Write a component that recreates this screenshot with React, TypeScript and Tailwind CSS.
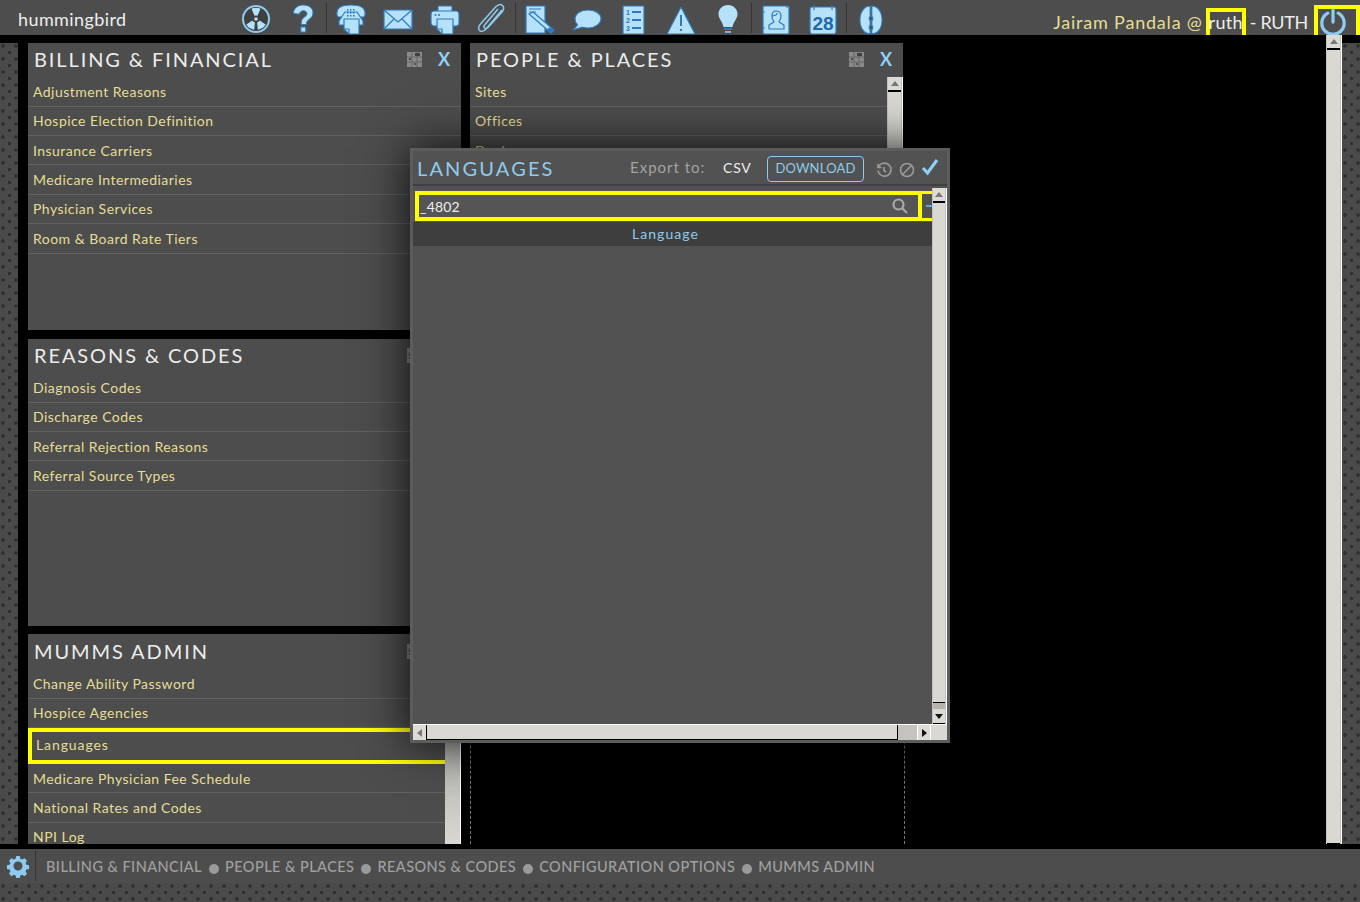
import React from "react";

const F = "#b5e2f9";
const S = "#2f79bd";

function Ico({ children, w = 32 }: { children: React.ReactNode; w?: number }) {
  return (
    <svg width={w} height={32} viewBox="0 0 32 32" fill={F} stroke={S} strokeWidth={1.2} strokeLinejoin="round">
      {children}
    </svg>
  );
}

const icons: Record<string, React.ReactNode> = {
  radiation: (
    <Ico>
      <circle cx="16" cy="17" r="13" fill="#3f3f3f" stroke="#8ecbf0" strokeWidth="2" />
      <g fill="#b5e2f9" stroke="none">
        <path d="M11.5 6.800a11 11 0 0 1 9 0l-3 7a3.400 3.400 0 0 0-3 0z" />
        <path d="M6.300 22.600a11 11 0 0 0 7.900 5.200l.7-7.500a3.400 3.400 0 0 1-2.500-1.800z" />
        <path d="M25.700 22.600a11 11 0 0 1-7.900 5.200l-.7-7.500a3.400 3.400 0 0 0 2.500-1.800z" />
        <circle cx="16" cy="17" r="1.800" />
      </g>
    </Ico>
  ),
  question: (
    <Ico>
      <path d="M6.500 11.500C6.500 6 11 3 16.200 3c5.600 0 9.800 3 9.800 7.800 0 3.400-1.800 5-3.800 6.500-1.700 1.300-2.700 2.300-2.700 4.200v1h-5.300v-1.500c0-3 1.400-4.500 3.200-5.900 1.500-1.200 2.600-2 2.600-3.300 0-1.800-1.600-3-3.600-3-2.300 0-3.700 1.300-3.900 3.400z" strokeWidth="1" />
      <rect x="13.800" y="25" width="5" height="5" />
    </Ico>
  ),
  phone: (
    <Ico>
      <path d="M2 13C1 6 6 3 16 3s15 3 14 10c0 1-1 2-2 2h-4c-1 0-2-1-2-2v-2H10v2c0 1-1 2-2 2H4c-1 0-2-1-2-2z" />
      <path d="M8 13l2-3h12l2 3 4 6v4H4v-4z" />
      <g fill="#2f79bd" stroke="none">
        <rect x="12" y="7" width="1.500" height="1.500" /><rect x="15" y="7" width="1.500" height="1.500" /><rect x="18" y="7" width="1.500" height="1.500" />
        <rect x="12" y="10" width="1.500" height="1.500" /><rect x="15" y="10" width="1.500" height="1.500" /><rect x="18" y="10" width="1.500" height="1.500" />
        <rect x="12" y="13" width="1.500" height="1.500" /><rect x="15" y="13" width="1.500" height="1.500" /><rect x="18" y="13" width="1.500" height="1.500" />
      </g>
      <path d="M9 17h15v15H14l-5-5z" />
      <path d="M9 27h5v5" fill="none" />
    </Ico>
  ),
  mail: (
    <Ico>
      <rect x="2" y="8" width="28" height="19" />
      <path d="M2 8l14 12L30 8M2 27l10-10M30 27L20 17" fill="none" />
    </Ico>
  ),
  printer: (
    <Ico>
      <path d="M9 9V4h14v5" />
      <path d="M5 9h22c1.500 0 3 1.500 3 3v9c0 1.500-1 3-3 3H5c-2 0-3-1.500-3-3v-9c0-1.500 1.500-3 3-3z" />
      <circle cx="6.500" cy="13" r="1" fill={S} stroke="none" />
      <circle cx="10" cy="13" r="1" fill={S} stroke="none" />
      <path d="M8 17h16v15H13l-5-5z" />
      <path d="M8 27h5v5" fill="none" />
    </Ico>
  ),
  clip: (
    <Ico>
      <path d="M26 8L10 27c-2 2-5 3-6.500 1.500S2.500 24 4.500 22L20 4.500c2-2 5-2.500 6.500-1s1.500 4-.5 6.500L12 25.500c-1 1-2.500 1.500-3.500.5s-.5-2.500.5-3.500L22 7" fill="none" stroke="#8ecbf0" strokeWidth="1.500" />
    </Ico>
  ),
  note: (
    <Ico>
      <rect x="2" y="4" width="19" height="27" />
      <path d="M5 7h12M5 10h7" fill="none" />
      <path d="M5 12l4-2 21 18-3 3z" fill={F} />
      <path d="M25 26l5 2-3 3-3-2z" fill={S} />
    </Ico>
  ),
  bubble: (
    <Ico>
      <path d="M17 8c7 0 13 3.500 13 8.500S24.500 26 17 26c-2 0-4-.3-5.500-.8L2 28l4.500-5C5 21.500 4 19.500 4 17 4 11.500 10 8 17 8z" />
    </Ico>
  ),
  list: (
    <Ico>
      <rect x="5" y="4" width="21" height="28" />
      <g fill="none" strokeWidth="2">
        <path d="M14 10h9M14 18h9M14 26h9" />
      </g>
      <g fill={S} stroke="none" fontSize="7" fontWeight="700" fontFamily="Liberation Sans, sans-serif">
        <text x="8" y="12.500">1</text>
        <text x="8" y="20.500">2</text>
        <text x="8" y="28.500">3</text>
      </g>
    </Ico>
  ),
  warning: (
    <Ico>
      <path d="M16 5l14 27H2z" fill={F} />
      <path d="M16 13v11" fill="none" strokeWidth="2" />
      <circle cx="16" cy="28" r="1.200" fill={S} stroke="none" />
    </Ico>
  ),
  bulb: (
    <Ico>
      <path d="M16 3c5.500 0 9.500 4 9.500 9 0 5-4 7.500-5 13h-9c-1-5.500-5-8-5-13 0-5 4-9 9.500-9z" stroke="none" />
      <path d="M12 26h8v2h-8z" fill={S} stroke="none" />
      <path d="M13 29h6v2h-6z" fill="#6fb1e0" stroke="none" />
    </Ico>
  ),
  contact: (
    <Ico>
      <rect x="3" y="4" width="26" height="28" rx="1" />
      <path d="M3 10h2M3 26h2M27 4v2" fill="none" />
      <path d="M16 9c3 0 5 2 5 5s-2 6-2 6l5 3v4H9v-4l5-3s-2-3-2-6 1-5 4-5z" fill="none" />
      <path d="M11.500 14c3 0 5-1 6-3" fill="none" />
    </Ico>
  ),
  calendar: (
    <Ico>
      <rect x="3" y="5" width="26" height="27" rx="2" />
      <path d="M7 3v5M25 3v5" fill="none" />
      <text x="16" y="28" textAnchor="middle" fontSize="19" fontWeight="700" fill="#1f66ad" stroke="none" fontFamily="Liberation Sans, sans-serif">28</text>
    </Ico>
  ),
  split: (
    <Ico>
      <g transform="translate(2.400 0) scale(.85 1)">
        <path d="M15 4C8 4 3 10 3 18s5 14 12 14v-5h-1v-3h1v-6h-1v-3h1z" />
        <path d="M17 4c7 0 12 6 12 14s-5 14-12 14v-5h1v-3h-1v-6h1v-3h-1z" />
      </g>
    </Ico>
  ),
};

function Cell({ name }: { name: string }) {
  return <div className="flex h-[35px] w-[47px] items-start justify-center pt-[2px]">{icons[name]}</div>;
}

function Sep() {
  return <div className="mt-[3px] h-[30px] w-px bg-[#333]" />;
}

function CalcIcon() {
  return (
    <svg width="15" height="15" viewBox="0 0 15 15">
      <rect width="15" height="15" fill="#8a8a8a" />
      <path d="M0 5h15M0 10h15M5 0v15M10 0v15" stroke="#666" strokeWidth="1" />
      <rect x="8" y="1" width="5" height="3" fill="#3f3f3f" />
      <rect x="2" y="6" width="2" height="2" fill="#444" />
      <rect x="7" y="11" width="2" height="2" fill="#555" />
    </svg>
  );
}

function Arrow({ dir }: { dir: "up" | "down" | "left" | "right" }) {
  const pts = { up: "1,7 5,2 9,7", down: "1,3 5,8 9,3", left: "7,1 2,5 7,9", right: "3,1 8,5 3,9" }[dir];
  return (
    <svg width="10" height="10" viewBox="0 0 10 10">
      <polygon points={pts} fill={dir === "up" || dir === "left" ? "#777" : "#111"} />
    </svg>
  );
}

function VScroll({ down, w = "w-[16px]" }: { down?: boolean; w?: string }) {
  return (
    <div className={`flex ${w} shrink-0 flex-col border-r border-white bg-[#c4c3bd] px-px`}>
      <div className="flex h-[15px] shrink-0 items-center justify-center border-b-2 border-black bg-[#dcdbd5]">
        <Arrow dir="up" />
      </div>
      <div className="min-h-0 flex-1 border-b border-black bg-[#d9d8d2]" />
      {down && (
        <>
          <div className="h-[6px] shrink-0 bg-[#b5b4ae]" />
          <div className="flex h-[15px] shrink-0 items-center justify-center border-b border-black bg-[#dcdbd5]">
            <Arrow dir="down" />
          </div>
        </>
      )}
    </div>
  );
}

function PanelScroll() {
  return <div className="w-[16px] shrink-0 border-r border-white bg-gradient-to-b from-[#8a8a86] to-[#d9d8d2]" />;
}

const Row = ({ t }: { t: string }) => (
  <div className="flex h-[29.4px] items-center border-b border-[#626262] pl-[5px] text-[14px] tracking-[0.47px] text-[#e4de94]">
    {t}
  </div>
);

function Title({ t }: { t: string }) {
  return (
    <div className="flex h-[34.2px] shrink-0 items-center pb-[2px] pl-[6px] pr-[10px] text-[20px] tracking-[1.9px] text-[#ececec]">
      <span className="flex-1 whitespace-nowrap">{t}</span>
      <span className="mr-[16px] flex">
        <CalcIcon />
      </span>
      <span className="mr-[1px] text-[18px] font-bold tracking-normal text-[#8fd0f7]">X</span>
    </div>
  );
}

function Panel({ title, rows }: { title: string; rows: string[] }) {
  return (
    <div className="h-[287px] shrink-0 overflow-hidden bg-[#4d4d4d]">
      <Title t={title} />
      {rows.map((r) => (
        <Row key={r} t={r} />
      ))}
    </div>
  );
}

function Strip() {
  return (
    <div className="w-[18px] shrink-0 bg-[#4a4a4a] bg-[radial-gradient(circle_at_3px_3px,#2f2f2f_1.5px,transparent_2px),radial-gradient(circle_at_9.5px_9.5px,#2f2f2f_1.5px,transparent_2px)] bg-[length:13px_13px]" />
  );
}

const crumbs = ["BILLING & FINANCIAL", "PEOPLE & PLACES", "REASONS & CODES", "CONFIGURATION OPTIONS", "MUMMS ADMIN"];

export default function App() {
  return (
    <div className="relative flex h-[902px] w-[1360px] flex-col overflow-hidden bg-black font-['Lato',sans-serif]">
      {/* top bar */}
      <header className="flex h-[35px] shrink-0 items-start bg-[#4d4d4d]">
        <div className="w-[232px] shrink-0 pl-[18px] pt-[7px] text-[18px] leading-[24px] tracking-[0.4px] text-[#eeeeee]">hummingbird</div>
        <Cell name="radiation" />
        <Cell name="question" />
        <Sep />
        <Cell name="phone" />
        <Cell name="mail" />
        <Cell name="printer" />
        <Cell name="clip" />
        <Sep />
        <Cell name="note" />
        <Cell name="bubble" />
        <Cell name="list" />
        <Cell name="warning" />
        <Cell name="bulb" />
        <Sep />
        <Cell name="contact" />
        <Cell name="calendar" />
        <Sep />
        <Cell name="split" />
        <div className="flex flex-1 items-start justify-end">
          <span className="mt-[10px] mr-[3px] text-[18px] leading-[24px] tracking-[0.8px] text-[#e4de94]">Jairam Pandala @</span>
          <span className="mt-[8px] flex h-[27px] w-[40px] items-start justify-center border-x-4 border-t-4 border-[#ffff00] text-[18px] leading-[21px] tracking-[0.3px] text-[#eeeeee]">ruth</span>
          <span className="mt-[10px] ml-[4px] mr-[6px] text-[18px] leading-[24px] tracking-[-0.3px] text-[#eeeeee]">- RUTH</span>
          <span className="mt-[5px] flex h-[30px] w-[46px] items-center justify-center border-x-4 border-t-4 border-[#ffff00] pr-[8px]">
            <svg width="28" height="28" viewBox="0 0 30 30" fill="none" className="shrink-0">
              <path d="M9.500 5.500a12 12 0 1 0 11 0" stroke="#8ecbf0" strokeWidth="3.500" strokeLinecap="round" />
              <path d="M15 2v13" stroke="#8ecbf0" strokeWidth="3.500" strokeLinecap="round" />
            </svg>
          </span>
        </div>
      </header>

      {/* main */}
      <main className="flex h-[809px] shrink-0">
        <div className="flex w-[18px] shrink-0 flex-col pt-[8px]">
          <div className="flex min-h-0 flex-1"><Strip /></div>
        </div>
        <div className="w-[10px] shrink-0" />
        <div className="flex w-[433px] shrink-0 flex-col pt-[8px]">
          <Panel title="BILLING & FINANCIAL" rows={["Adjustment Reasons", "Hospice Election Definition", "Insurance Carriers", "Medicare Intermediaries", "Physician Services", "Room & Board Rate Tiers"]} />
          <div className="h-[9px] shrink-0" />
          <Panel title="REASONS & CODES" rows={["Diagnosis Codes", "Discharge Codes", "Referral Rejection Reasons", "Referral Source Types"]} />
          <div className="h-[8px] shrink-0" />
          <div className="flex min-h-0 flex-1 overflow-hidden bg-[#4d4d4d]">
            <div className="min-w-0 flex-1">
              <div className="-mr-[16px] pt-[1px]"><Title t="MUMMS ADMIN" /></div>
              <Row t="Change Ability Password" />
              <Row t="Hospice Agencies" />
              <div className="flex h-[36px] items-center border-y-4 border-l-4 border-[#ffff00] pb-[2px] pl-[4px] text-[14px] tracking-[0.9px] text-[#e4de94]">Languages</div>
              <Row t="Medicare Physician Fee Schedule" />
              <Row t="National Rates and Codes" />
              <Row t="NPI Log" />
            </div>
            <PanelScroll />
          </div>
        </div>
        <div className="w-[9px] shrink-0" />
        <div className="flex w-[433px] shrink-0 flex-col pt-[8px]">
          <div className="flex h-[287px] shrink-0 flex-col overflow-hidden bg-[#4d4d4d]">
            <Title t="PEOPLE & PLACES" />
            <div className="flex min-h-0 flex-1">
              <div className="min-w-0 flex-1">
                <Row t="Sites" />
                <Row t="Offices" />
                <Row t="Devices" />
              </div>
              <VScroll />
            </div>
          </div>
          <div className="mt-[9px] min-h-0 w-[435px] flex-1 border-x border-dashed border-[#777]" />
        </div>
        <div className="flex-1" />
        <VScroll />
        <div className="flex w-[18px] shrink-0 flex-col pt-[8px]">
          <div className="flex min-h-0 flex-1"><Strip /></div>
        </div>
      </main>

      <div className="h-[5px] shrink-0" />

      {/* bottom bar */}
      <footer className="flex min-h-0 flex-1 flex-col bg-[#4d4d4d]">
        <div className="flex h-[34px] shrink-0 items-center">
          <div className="flex w-[35px] shrink-0 items-center justify-center">
            <svg width="24" height="24" viewBox="0 0 24 24" fill="#8ecbf0">
              <path fillRule="evenodd" d="M10 1h4l.6 3 2 .9 2.600-1.600 2.800 2.800-1.600 2.600.9 2 3 .6v4l-3 .6-.9 2 1.600 2.600-2.800 2.800-2.600-1.600-2 .9-.6 3h-4l-.6-3-2-.9-2.600 1.600-2.800-2.800 1.600-2.600-.9-2-3-.6v-4l3-.6.9-2-1.600-2.600 2.800-2.800 2.600 1.600 2-.9zm2 6a5 5 0 1 0 0 10 5 5 0 0 0 0-10z" transform="translate(1.200 1.200) scale(.9)" />
            </svg>
          </div>
          <div className="h-[30px] w-px bg-[#333]" />
          <div className="ml-[10px] mt-[2px] flex items-center">
            {crumbs.map((c, i) => (
              <React.Fragment key={c}>
                {i > 0 && <span className="mx-[6.5px] mt-[4px] h-[10px] w-[10px] rounded-full bg-[#9a9a9a]" />}
                <span className="whitespace-nowrap text-[14.500px] font-medium tracking-[0.45px] text-[#a0a0a0]">{c}</span>
              </React.Fragment>
            ))}
          </div>
        </div>
        <div className="min-h-0 flex-1 bg-[#4a4a4a] bg-[radial-gradient(circle_at_3px_3px,#2f2f2f_1.5px,transparent_2px),radial-gradient(circle_at_9.5px_9.5px,#2f2f2f_1.5px,transparent_2px)] bg-[length:13px_13px]" />
      </footer>

      {/* dialog */}
      <div className="absolute left-[410px] top-[148px] flex h-[595px] w-[540px] flex-col border-[3px] border-[#5c5c5c] bg-[#525252] shadow-[0_0_45px_rgba(0,0,0,0.85)]">
        <div className="flex h-[35px] shrink-0 items-center border-b-2 border-[#3f3f3f] pl-[4px]">
          <span className="w-[213px] text-[20px] tracking-[2.15px] text-[#8fcbec]">LANGUAGES</span>
          <span className="w-[93px] text-[15px] tracking-[1px] text-[#a3a3a3]">Export to:</span>
          <span className="w-[44px] text-[14px] tracking-[0.8px] text-[#eeeeee]">CSV</span>
          <span className="mt-[2px] flex h-[26px] w-[97px] items-center justify-center rounded-[4px] border border-[#8fcbec] text-[13px] tracking-[0.2px] text-[#8fcbec]">DOWNLOAD</span>
          <span className="ml-[12px] mt-[5px] flex">
            <svg width="16" height="16" viewBox="0 0 16 16" fill="none" stroke="#9a9a9a" strokeWidth="1.600">
              <path d="M2.500 5a6.500 6.500 0 1 1-.5 3.500M2 2v3.500h3.500M8 5v3.500l2 1.500" />
            </svg>
          </span>
          <span className="ml-[7px] mt-[5px] flex">
            <svg width="16" height="16" viewBox="0 0 16 16" fill="none" stroke="#9a9a9a" strokeWidth="1.600">
              <circle cx="8" cy="8" r="6.500" />
              <path d="M3.500 12.500l9-9" />
            </svg>
          </span>
          <span className="ml-[6px] mt-[-1px] flex">
            <svg width="18" height="18" viewBox="0 0 18 18" fill="none" stroke="#8fd0f7" strokeWidth="3">
              <path d="M2 10l4.500 5L16 2" />
            </svg>
          </span>
        </div>
        <div className="flex min-h-0 flex-1">
          <div className="flex min-w-0 flex-1 flex-col pt-[5px]">
            <div className="flex h-[30px] shrink-0 items-stretch">
              <div className="ml-[2px] flex w-[507px] items-center border-4 border-[#ffff00] bg-[#555] pr-[10px]">
                <span className="flex-1 pl-[1px] text-[14px] tracking-[0.2px] text-[#eeeeee]">_4802</span>
                <svg width="16" height="16" viewBox="0 0 16 16" fill="none" stroke="#aaaaaa" strokeWidth="2.200">
                  <circle cx="6.500" cy="6.500" r="5" />
                  <path d="M10.500 10.500L15 15" />
                </svg>
              </div>
              <div className="flex flex-1 items-center justify-end border-y-[3px] border-[#ffff00]">
                <span className="h-[2px] w-[6px] bg-[#5aa6e0]" />
              </div>
            </div>
            <div className="mt-[1px] flex h-[24px] shrink-0 items-center justify-center bg-[#3e3e3e] pb-[2px] pr-[14px] text-[14px] tracking-[1.05px] text-[#8fcbec]">Language</div>
            <div className="flex-1" />
          </div>
          <VScroll down w="mt-[2px] w-[15px]" />
        </div>
        <div className="flex h-[16px] shrink-0 border-t border-white bg-[#c4c3bd]">
          <div className="flex w-[14px] shrink-0 items-center justify-center border-r border-black bg-[#dcdbd5]"><Arrow dir="left" /></div>
          <div className="w-[471px] shrink-0 border-b border-r border-black bg-[#d9d8d2]" />
          <div className="flex-1" />
          <div className="flex w-[14px] shrink-0 items-center justify-center border-x border-white bg-[#dcdbd5]"><Arrow dir="right" /></div>
          <div className="w-[16px] shrink-0 bg-[#d9d8d2]" />
        </div>
      </div>
    </div>
  );
}
